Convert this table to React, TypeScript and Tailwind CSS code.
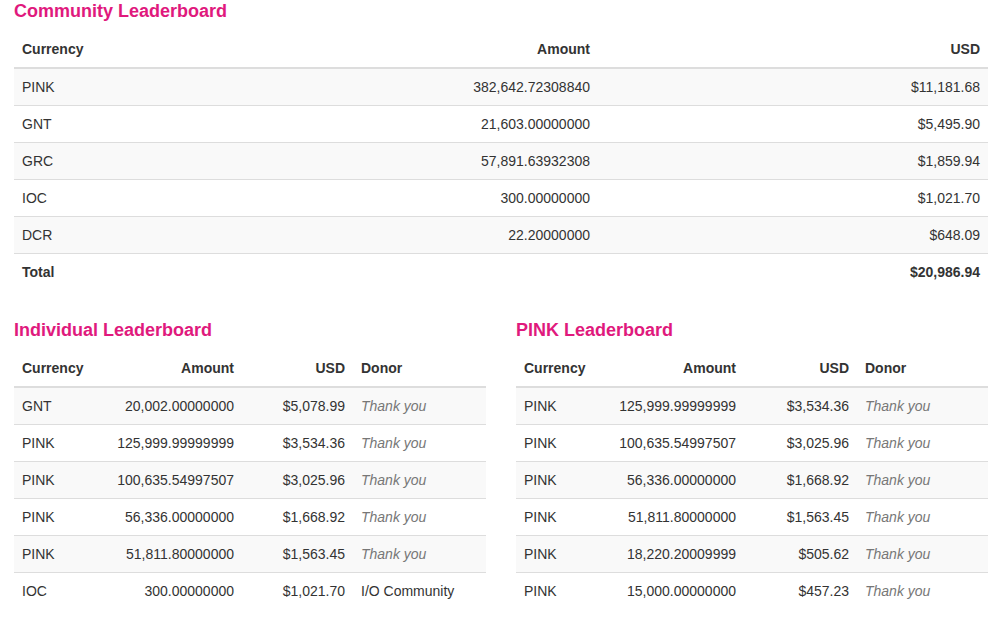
type Row = { cur: string; amount: string; usd: string; donor?: string }

const community: Row[] = [
  { cur: "PINK", amount: "382,642.72308840", usd: "$11,181.68" },
  { cur: "GNT", amount: "21,603.00000000", usd: "$5,495.90" },
  { cur: "GRC", amount: "57,891.63932308", usd: "$1,859.94" },
  { cur: "IOC", amount: "300.00000000", usd: "$1,021.70" },
  { cur: "DCR", amount: "22.20000000", usd: "$648.09" },
]

const individual: Row[] = [
  { cur: "GNT", amount: "20,002.00000000", usd: "$5,078.99" },
  { cur: "PINK", amount: "125,999.99999999", usd: "$3,534.36" },
  { cur: "PINK", amount: "100,635.54997507", usd: "$3,025.96" },
  { cur: "PINK", amount: "56,336.00000000", usd: "$1,668.92" },
  { cur: "PINK", amount: "51,811.80000000", usd: "$1,563.45" },
  { cur: "IOC", amount: "300.00000000", usd: "$1,021.70", donor: "I/O Community" },
]

const pink: Row[] = [
  { cur: "PINK", amount: "125,999.99999999", usd: "$3,534.36" },
  { cur: "PINK", amount: "100,635.54997507", usd: "$3,025.96" },
  { cur: "PINK", amount: "56,336.00000000", usd: "$1,668.92" },
  { cur: "PINK", amount: "51,811.80000000", usd: "$1,563.45" },
  { cur: "PINK", amount: "18,220.20009999", usd: "$505.62" },
  { cur: "PINK", amount: "15,000.00000000", usd: "$457.23" },
]

function Heading({ children }: { children: string }) {
  return <h3 className="text-[18px] leading-[22px] font-bold text-[#e0197d] mb-[9px]">{children}</h3>
}

function DonorTable({ rows, wide }: { rows: Row[]; wide?: boolean }) {
  return (
    <table className="w-full table-fixed border-collapse">
      <thead>
        <tr className="border-b-2 border-[#ddd]">
          <th className="w-[86px] p-2 text-left font-bold">Currency</th>
          <th className="w-[142px] p-2 text-right font-bold">Amount</th>
          <th className={`${wide ? "w-[113px]" : "w-[111px]"} p-2 text-right font-bold`}>USD</th>
          <th className="p-2 text-left font-bold">Donor</th>
        </tr>
      </thead>
      <tbody>
        {rows.map((r, i) => (
          <tr key={i} className={`border-t border-[#ddd] ${i % 2 === 0 ? "bg-[#f9f9f9]" : ""}`}>
            <td className="p-2">{r.cur}</td>
            <td className="p-2 text-right">{r.amount}</td>
            <td className="p-2 text-right">{r.usd}</td>
            {r.donor ? (
              <td className="p-2 whitespace-nowrap">{r.donor}</td>
            ) : (
              <td className="p-2 italic text-[#777]">Thank you</td>
            )}
          </tr>
        ))}
      </tbody>
    </table>
  )
}

export default function App() {
  return (
    <div className="bg-white min-h-screen pl-[14px] pr-[12px] text-[14px] leading-[20px] text-[#333] font-['Liberation_Sans',Arial,sans-serif]">
      <Heading>Community Leaderboard</Heading>
      <table className="w-full table-fixed border-collapse mb-[29px]">
        <thead>
          <tr className="border-b-2 border-[#ddd]">
            <th className="w-[194px] p-2 text-left font-bold">Currency</th>
            <th className="w-[390px] p-2 text-right font-bold">Amount</th>
            <th className="p-2 text-right font-bold">USD</th>
          </tr>
        </thead>
        <tbody>
          {community.map((r, i) => (
            <tr key={i} className={`border-t border-[#ddd] ${i % 2 === 0 ? "bg-[#f9f9f9]" : ""}`}>
              <td className="p-2">{r.cur}</td>
              <td className="p-2 text-right">{r.amount}</td>
              <td className="p-2 text-right">{r.usd}</td>
            </tr>
          ))}
          <tr className="border-t border-[#ddd]">
            <td className="p-2 font-bold">Total</td>
            <td className="p-2"></td>
            <td className="p-2 text-right font-bold">$20,986.94</td>
          </tr>
        </tbody>
      </table>

      <div className="grid grid-cols-2 gap-[30px]">
        <div>
          <Heading>Individual Leaderboard</Heading>
          <DonorTable rows={individual} />
        </div>
        <div>
          <Heading>PINK Leaderboard</Heading>
          <DonorTable rows={pink} wide />
        </div>
      </div>
    </div>
  )
}
